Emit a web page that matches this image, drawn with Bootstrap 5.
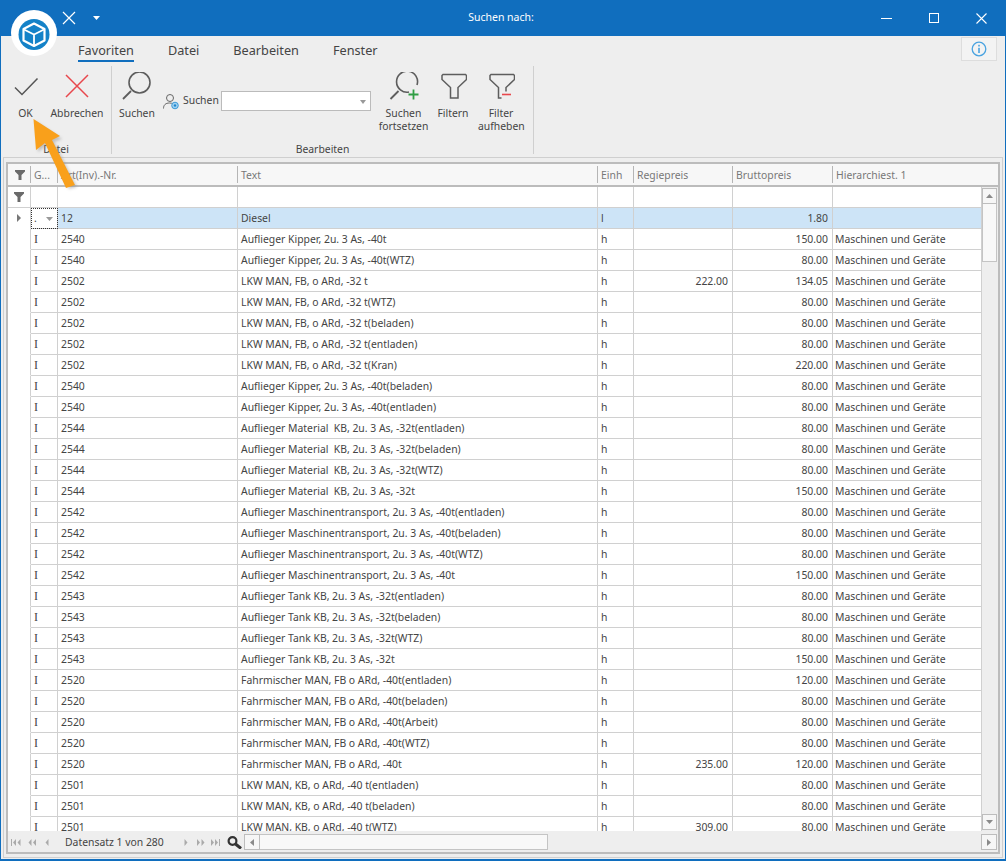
<!DOCTYPE html>
<html lang="de">
<head>
<meta charset="utf-8">
<title>Suchen nach:</title>
<link href="https://cdn.jsdelivr.net/npm/bootstrap@5.3.0/dist/css/bootstrap.min.css" rel="stylesheet">
<style>
html,body{margin:0;height:861px;overflow:hidden;background:#eee}
body{font-family:"Noto Sans","Liberation Sans",sans-serif;font-size:10.4px;color:#444;position:relative}
.win{height:861px;width:1006px;border-left:1px solid #106ebe;border-right:1px solid #106ebe;border-bottom:2px solid #106ebe;background:#eee;overflow:hidden}
.tbar{height:36px;background:#106ebe;color:#fff;margin-left:-1px;margin-right:-1px;font-size:10.5px}
.tbar-qat{padding-left:62px;width:340px;gap:17px}
.tbar-title{width:322px;text-align:center}
.tbar-btns{width:344px;padding-right:19px;gap:37px}
.tabs{height:30px;padding-left:77px;gap:34px;font-size:12.7px;color:#444;position:relative}
.tabx{padding:4px 0 0;height:26px;line-height:20px}
.tabx.on{border-bottom:2px solid #106ebe}
.infob{position:absolute;right:8px;top:1px;width:36px;height:24px;border:1px solid #ddd;background:#f3f3f3}
.rib{height:88px;position:relative}
.rgroup{height:88px;border-right:1px solid #cfcfcf;position:relative}
.g1{width:111px}.g2{width:422px}
.rlabel{position:absolute;left:0;right:0;text-align:center;line-height:14px;height:14px;top:76px}
.rbtn{position:absolute;top:6px;text-align:center;line-height:13px;white-space:nowrap}
.rbtn svg{display:block;margin:0 auto 7px}
.b-ok{left:9px;width:31px}
.b-ab{left:49px;width:54px}
.b-su{left:6px;width:38px}
.b-fo{left:265px;width:53px}
.b-fi{left:321px;width:40px}
.b-fa{left:366px;width:46px}
.sline{position:absolute;left:51px;top:25px;display:flex;align-items:center;height:20px}
.slabel{margin-left:4px}
.cmb{width:150px;height:20px;border:1px solid #bbb;background:#fff;margin-left:2px;position:relative}
.cmb i{position:absolute;right:4px;top:8px;border:3px solid transparent;border-top:4px solid #999;border-bottom:0}
.gridwrap{margin:3px 2px 0 2px;height:701px;border:1px solid #cfcfcf;padding:4px 2px 2px 2px}
.gridin{height:692px;border:2px solid #bcbcbc;background:#eee;position:relative;display:flex;flex-direction:column}
.gmain{height:667px;overflow:hidden;display:flex}
.tclip{width:974px;overflow:hidden;height:667px}
table.dt{table-layout:fixed;border-collapse:separate;border-spacing:0;width:974px;background:#fff;color:#444;font-size:10.4px}
.c0{width:23px}.c1{width:27px}.c2{width:180px}.c3{width:360px}.c4{width:36px}.c5{width:99px}.c6{width:100px}.c7{width:149px}
table.dt td,table.dt th{height:21px;padding:0 3px;border-right:1px solid #d0d0d0;border-bottom:1px solid #d0d0d0;font-weight:400;white-space:nowrap;overflow:hidden;line-height:15px}
table.dt th{background:#f7f7f7;height:23px;color:#777;border-right:0;border-bottom:2px solid #bcbcbc;position:relative;padding-top:1px}
table.dt th::after{content:"";position:absolute;right:0;top:2px;bottom:2px;border-right:1px solid #b5b5b5}
table.dt th:last-child::after{display:none}
table.dt td:last-child{padding-left:2px}
table.dt td:first-child{background:#fff;padding:0;text-align:center;border-bottom-color:#fff}
table.dt th:first-child{padding:0;text-align:center}
table.dt tr.flt td:first-child{border-bottom-color:#d0d0d0}
table.dt tr.sel td{background:#cde4f7}
table.dt tr.sel td:first-child{background:#fff}
table.dt tr.sel td.cur{background:#fff;outline:1px dotted #333;outline-offset:-1px}
table.dt td.num{text-align:right;padding-right:4px}
table.dt td.ser{font-family:"Liberation Serif",serif;font-size:12px}
.fn{display:block;margin:0 auto}
.curarrow{margin-left:9px;vertical-align:middle}
.vs{width:16px;display:flex;flex-direction:column;background:#eee}
.vhead{height:23px;flex:none;background:#f7f7f7;border-bottom:2px solid #bcbcbc;margin-bottom:1px}
.sbtn{background:#f6f6f6;border:1px solid #bdbdbd;display:flex;align-items:center;justify-content:center;flex:none}
.sbtn.ud{height:16px;width:15px}
.thumb{height:58px;width:15px;background:#f8f8f8;border:1px solid #c4c4c4;border-top:0;flex:none}
.sbtn.dn{margin-bottom:1px}
.gfoot{height:21px;display:flex;align-items:flex-start;padding-top:3px;background:#eee;font-size:10.4px;color:#444}
.pager{width:236px;height:16px;display:flex;align-items:center;padding-left:3px;white-space:nowrap}
.pager svg{flex:none}
.m7{margin-left:7px}.m9{margin-left:9px}.m6{margin-left:6px}
.ptext{margin:1px 0 0 16px;width:100px;flex:none}
.pn{margin-left:19px}
.hs{display:flex;height:16px;align-items:stretch}
.hs .sbtn{width:16px}
.hthumb{width:288px;background:#f8f8f8;border:1px solid #c4c4c4;border-left:0}
.gap{flex:1}
.sbtn.rt{width:16px;height:16px;margin-right:1px}
.overlay{position:absolute;pointer-events:none}
.ov-logo{left:11px;top:10px}
.ov-arrow{left:30px;top:115px}
</style>
</head>
<body>
<div class="win">
  <div class="tbar d-flex align-items-center">
    <div class="tbar-qat d-flex align-items-center">
      <svg width="14" height="14" viewBox="0 0 14 14"><path d="M1 1 13 13M13 1 1 13" stroke="#fff" stroke-width="1.200"/></svg>
      <svg width="7" height="4" viewBox="0 0 7 4"><path d="M0 0h7L3.500 4z" fill="#fff"/></svg>
    </div>
    <div class="tbar-title">Suchen nach:</div>
    <div class="tbar-btns d-flex align-items-center justify-content-end ms-auto">
      <svg width="11" height="11" viewBox="0 0 11 11"><path d="M0 5.500H11" stroke="#fff"/></svg>
      <svg width="10" height="10" viewBox="0 0 10 10"><rect x=".5" y=".5" width="9" height="9" fill="none" stroke="#fff"/></svg>
      <svg width="11" height="11" viewBox="0 0 11 11"><path d="M.5.500 10.500 10.500M10.500.500.500 10.500" stroke="#fff" stroke-width="1.100"/></svg>
    </div>
  </div>
  <div class="tabs d-flex">
    <div class="tabx on">Favoriten</div><div class="tabx">Datei</div><div class="tabx">Bearbeiten</div><div class="tabx">Fenster</div>
    <div class="infob d-flex align-items-center justify-content-center">
      <svg width="16" height="16" viewBox="0 0 16 16"><circle cx="8" cy="8" r="6.800" fill="none" stroke="#4aa3e0" stroke-width="1.300"/><rect x="7.200" y="3.800" width="1.600" height="1.700" fill="#4aa3e0"/><rect x="7.200" y="6.800" width="1.600" height="5.200" fill="#4aa3e0"/></svg>
    </div>
  </div>
  <div class="rib d-flex">
    <div class="rgroup g1">
      <div class="rbtn b-ok"><svg width="26" height="28" viewBox="0 0 26 28"><path d="M2 15.500 9 22.500 24.500 6.500" fill="none" stroke="#555" stroke-width="1.500"/></svg>OK</div>
      <div class="rbtn b-ab"><svg width="26" height="28" viewBox="0 0 26 28"><path d="M2 3 24 25M24 3 2 25" stroke="#e8474c" stroke-width="1.500"/></svg>Abbrechen</div>
      <div class="rlabel">Datei</div>
    </div>
    <div class="rgroup g2">
      <div class="rbtn b-su"><svg width="30" height="28" viewBox="0 0 30 28"><circle cx="17.500" cy="10.500" r="10.500" fill="none" stroke="#5d5d5d" stroke-width="1.600"/><path d="M1 27 9 19" stroke="#5d5d5d" stroke-width="1.800"/></svg>Suchen</div>
      <div class="sline">
        <svg width="16" height="17" viewBox="0 0 16 17"><circle cx="7" cy="5" r="3.500" fill="none" stroke="#666"/><path d="M.5 15.500c0-3.500 2-5.500 6-5.500 1.500 0 2.500.3 3.300.8" fill="none" stroke="#666"/><circle cx="12" cy="12.500" r="3.300" fill="#9fd0ef" stroke="#3c9ad8"/><circle cx="12" cy="12.500" r="1.200" fill="#1f86cf"/></svg>
        <span class="slabel">Suchen</span><div class="cmb"><i></i></div>
      </div>
      <div class="rbtn b-fo"><svg width="30" height="28" viewBox="0 0 30 28"><path d="M20 20A10.500 10.500 0 1 1 28 13" fill="none" stroke="#5d5d5d" stroke-width="1.600"/><path d="M1.500 27 9.500 19" stroke="#5d5d5d" stroke-width="1.800"/><path d="M24.500 17.500v10M19.500 22.500h10" stroke="#2f9e44" stroke-width="1.800"/></svg>Suchen<br>fortsetzen</div>
      <div class="rbtn b-fi"><svg width="28" height="28" viewBox="0 0 28 28"><path d="M4 2.500H26.500L27.500 3.500V7.500L19 15.500V26H11.500V15.500L3 7.500V3.500Z" fill="none" stroke="#5d5d5d" stroke-width="1.500"/></svg>Filtern</div>
      <div class="rbtn b-fa"><svg width="28" height="28" viewBox="0 0 28 28"><path d="M14.500 26H11.500V15.500L3 7.500V3.500L4 2.500H26.500L27.500 3.500V7.500L19 15.500V19.500" fill="none" stroke="#5d5d5d" stroke-width="1.500"/><path d="M15 22.500H24" stroke="#e8474c" stroke-width="1.600"/></svg>Filter<br>aufheben</div>
      <div class="rlabel">Bearbeiten</div>
    </div>
  </div>
  <div class="gridwrap">
    <div class="gridin">
      <div class="gmain">
        <div class="tclip">
        <table class="dt">
          <colgroup><col class="c0"><col class="c1"><col class="c2"><col class="c3"><col class="c4"><col class="c5"><col class="c6"><col class="c7"></colgroup>
          <thead><tr><th><svg class="fn" width="10" height="10" viewBox="0 0 10 10"><path d="M0 0H10V1.500L6.500 5V10H3.500V5L0 1.500Z" fill="#6a6a6a"/></svg></th><th>G...</th><th>Art(Inv).-Nr.</th><th>Text</th><th>Einh</th><th>Regiepreis</th><th>Bruttopreis</th><th>Hierarchiest. 1</th></tr></thead>
          <tbody>
<tr class="flt"><td><svg class="fn" width="10" height="10" viewBox="0 0 10 10"><path d="M0 0H10V1.500L6.500 5V10H3.500V5L0 1.500Z" fill="#6a6a6a"/></svg></td><td></td><td></td><td></td><td></td><td></td><td></td><td></td></tr>
<tr class="sel"><td><svg class="fn" width="4" height="8" viewBox="0 0 4 8"><path d="M0 0 4 4 0 8Z" fill="#777"/></svg></td><td class="cur">.<svg class="curarrow" width="7" height="4" viewBox="0 0 7 4"><path d="M0 0H7L3.500 4Z" fill="#999"/></svg></td><td>12</td><td>Diesel</td><td>l</td><td></td><td class="num">1.80</td><td></td></tr>
<tr><td></td><td class="ser">I</td><td>2540</td><td>Auflieger Kipper, 2u. 3 As, -40t</td><td>h</td><td></td><td class="num">150.00</td><td>Maschinen und Geräte</td></tr>
<tr><td></td><td class="ser">I</td><td>2540</td><td>Auflieger Kipper, 2u. 3 As, -40t(WTZ)</td><td>h</td><td></td><td class="num">80.00</td><td>Maschinen und Geräte</td></tr>
<tr><td></td><td class="ser">I</td><td>2502</td><td>LKW MAN, FB, o ARd, -32 t</td><td>h</td><td class="num">222.00</td><td class="num">134.05</td><td>Maschinen und Geräte</td></tr>
<tr><td></td><td class="ser">I</td><td>2502</td><td>LKW MAN, FB, o ARd, -32 t(WTZ)</td><td>h</td><td></td><td class="num">80.00</td><td>Maschinen und Geräte</td></tr>
<tr><td></td><td class="ser">I</td><td>2502</td><td>LKW MAN, FB, o ARd, -32 t(beladen)</td><td>h</td><td></td><td class="num">80.00</td><td>Maschinen und Geräte</td></tr>
<tr><td></td><td class="ser">I</td><td>2502</td><td>LKW MAN, FB, o ARd, -32 t(entladen)</td><td>h</td><td></td><td class="num">80.00</td><td>Maschinen und Geräte</td></tr>
<tr><td></td><td class="ser">I</td><td>2502</td><td>LKW MAN, FB, o ARd, -32 t(Kran)</td><td>h</td><td></td><td class="num">220.00</td><td>Maschinen und Geräte</td></tr>
<tr><td></td><td class="ser">I</td><td>2540</td><td>Auflieger Kipper, 2u. 3 As, -40t(beladen)</td><td>h</td><td></td><td class="num">80.00</td><td>Maschinen und Geräte</td></tr>
<tr><td></td><td class="ser">I</td><td>2540</td><td>Auflieger Kipper, 2u. 3 As, -40t(entladen)</td><td>h</td><td></td><td class="num">80.00</td><td>Maschinen und Geräte</td></tr>
<tr><td></td><td class="ser">I</td><td>2544</td><td>Auflieger Material&nbsp; KB, 2u. 3 As, -32t(entladen)</td><td>h</td><td></td><td class="num">80.00</td><td>Maschinen und Geräte</td></tr>
<tr><td></td><td class="ser">I</td><td>2544</td><td>Auflieger Material&nbsp; KB, 2u. 3 As, -32t(beladen)</td><td>h</td><td></td><td class="num">80.00</td><td>Maschinen und Geräte</td></tr>
<tr><td></td><td class="ser">I</td><td>2544</td><td>Auflieger Material&nbsp; KB, 2u. 3 As, -32t(WTZ)</td><td>h</td><td></td><td class="num">80.00</td><td>Maschinen und Geräte</td></tr>
<tr><td></td><td class="ser">I</td><td>2544</td><td>Auflieger Material&nbsp; KB, 2u. 3 As, -32t</td><td>h</td><td></td><td class="num">150.00</td><td>Maschinen und Geräte</td></tr>
<tr><td></td><td class="ser">I</td><td>2542</td><td>Auflieger Maschinentransport, 2u. 3 As, -40t(entladen)</td><td>h</td><td></td><td class="num">80.00</td><td>Maschinen und Geräte</td></tr>
<tr><td></td><td class="ser">I</td><td>2542</td><td>Auflieger Maschinentransport, 2u. 3 As, -40t(beladen)</td><td>h</td><td></td><td class="num">80.00</td><td>Maschinen und Geräte</td></tr>
<tr><td></td><td class="ser">I</td><td>2542</td><td>Auflieger Maschinentransport, 2u. 3 As, -40t(WTZ)</td><td>h</td><td></td><td class="num">80.00</td><td>Maschinen und Geräte</td></tr>
<tr><td></td><td class="ser">I</td><td>2542</td><td>Auflieger Maschinentransport, 2u. 3 As, -40t</td><td>h</td><td></td><td class="num">150.00</td><td>Maschinen und Geräte</td></tr>
<tr><td></td><td class="ser">I</td><td>2543</td><td>Auflieger Tank KB, 2u. 3 As, -32t(entladen)</td><td>h</td><td></td><td class="num">80.00</td><td>Maschinen und Geräte</td></tr>
<tr><td></td><td class="ser">I</td><td>2543</td><td>Auflieger Tank KB, 2u. 3 As, -32t(beladen)</td><td>h</td><td></td><td class="num">80.00</td><td>Maschinen und Geräte</td></tr>
<tr><td></td><td class="ser">I</td><td>2543</td><td>Auflieger Tank KB, 2u. 3 As, -32t(WTZ)</td><td>h</td><td></td><td class="num">80.00</td><td>Maschinen und Geräte</td></tr>
<tr><td></td><td class="ser">I</td><td>2543</td><td>Auflieger Tank KB, 2u. 3 As, -32t</td><td>h</td><td></td><td class="num">150.00</td><td>Maschinen und Geräte</td></tr>
<tr><td></td><td class="ser">I</td><td>2520</td><td>Fahrmischer MAN, FB o ARd, -40t(entladen)</td><td>h</td><td></td><td class="num">120.00</td><td>Maschinen und Geräte</td></tr>
<tr><td></td><td class="ser">I</td><td>2520</td><td>Fahrmischer MAN, FB o ARd, -40t(beladen)</td><td>h</td><td></td><td class="num">80.00</td><td>Maschinen und Geräte</td></tr>
<tr><td></td><td class="ser">I</td><td>2520</td><td>Fahrmischer MAN, FB o ARd, -40t(Arbeit)</td><td>h</td><td></td><td class="num">80.00</td><td>Maschinen und Geräte</td></tr>
<tr><td></td><td class="ser">I</td><td>2520</td><td>Fahrmischer MAN, FB o ARd, -40t(WTZ)</td><td>h</td><td></td><td class="num">80.00</td><td>Maschinen und Geräte</td></tr>
<tr><td></td><td class="ser">I</td><td>2520</td><td>Fahrmischer MAN, FB o ARd, -40t</td><td>h</td><td class="num">235.00</td><td class="num">120.00</td><td>Maschinen und Geräte</td></tr>
<tr><td></td><td class="ser">I</td><td>2501</td><td>LKW MAN, KB, o ARd, -40 t(entladen)</td><td>h</td><td></td><td class="num">80.00</td><td>Maschinen und Geräte</td></tr>
<tr><td></td><td class="ser">I</td><td>2501</td><td>LKW MAN, KB, o ARd, -40 t(beladen)</td><td>h</td><td></td><td class="num">80.00</td><td>Maschinen und Geräte</td></tr>
<tr><td></td><td class="ser">I</td><td>2501</td><td>LKW MAN, KB, o ARd, -40 t(WTZ)</td><td>h</td><td class="num">309.00</td><td class="num">80.00</td><td>Maschinen und Geräte</td></tr>
          </tbody>
        </table>
        </div>
        <div class="vs">
          <div class="vhead"></div>
          <div class="sbtn ud"><svg width="7" height="4" viewBox="0 0 7 4"><path d="M0 4H7L3.500 0Z" fill="#8a8a8a"/></svg></div>
          <div class="thumb"></div>
          <div class="gap"></div>
          <div class="sbtn ud dn"><svg width="7" height="4" viewBox="0 0 7 4"><path d="M0 0H7L3.500 4Z" fill="#8a8a8a"/></svg></div>
        </div>
      </div>
      <div class="gfoot">
        <div class="pager">
          <svg width="10" height="7" viewBox="0 0 10 7"><path d="M0 0H1V7H0ZM5 0V7L2 3.500ZM9.500 0V7L6.500 3.500Z" fill="#aaa"/></svg>
          <svg class="m7" width="8" height="7" viewBox="0 0 8 7"><path d="M3.500 0V7L.5 3.500ZM8 0V7L5 3.500Z" fill="#aaa"/></svg>
          <svg class="m9" width="4" height="7" viewBox="0 0 4 7"><path d="M3.500 0V7L.5 3.500Z" fill="#aaa"/></svg>
          <span class="ptext">Datensatz 1 von 280</span>
          <svg class="pn" width="4" height="7" viewBox="0 0 4 7"><path d="M.5 0V7L3.500 3.500Z" fill="#aaa"/></svg>
          <svg class="m9" width="8" height="7" viewBox="0 0 8 7"><path d="M0 0V7L3 3.500ZM4.500 0V7L7.500 3.500Z" fill="#aaa"/></svg>
          <svg class="m6" width="10" height="7" viewBox="0 0 10 7"><path d="M0 0V7L3 3.500ZM4 0V7L7 3.500ZM8 0H9V7H8Z" fill="#aaa"/></svg>
          <svg class="m6" width="15" height="13" viewBox="0 0 15 13"><circle cx="5.500" cy="5" r="3.900" fill="none" stroke="#333" stroke-width="2.200"/><path d="M8.500 8 14 12.500" stroke="#333" stroke-width="3"/></svg>
        </div>
        <div class="hs">
          <div class="sbtn"><svg width="4" height="7" viewBox="0 0 4 7"><path d="M4 0V7L0 3.500Z" fill="#8a8a8a"/></svg></div>
          <div class="hthumb"></div>
        </div>
        <div class="gap"></div>
        <div class="sbtn rt"><svg width="4" height="7" viewBox="0 0 4 7"><path d="M0 0V7L4 3.500Z" fill="#8a8a8a"/></svg></div>
      </div>
    </div>
  </div>
</div>
<svg class="overlay ov-logo" width="47" height="47" viewBox="0 0 47 47">
  <circle cx="23" cy="23" r="23" fill="#fff"/>
  <circle cx="23" cy="24.500" r="15.500" fill="#1482c8"/>
  <path d="M23 13.500 33.500 19V30.500L23 36 12.500 30.500V19Z" fill="#1482c8" stroke="#fff" stroke-width="2.200" stroke-linejoin="round"/>
  <path d="M13 19.500 23 24.500 33 19.500M23 24.500V35.500" fill="none" stroke="#fff" stroke-width="1.800"/>
</svg>
<svg class="overlay ov-arrow" width="55" height="80" viewBox="0 0 55 80">
  <defs><filter id="blr" x="-20%" y="-20%" width="140%" height="140%"><feGaussianBlur stdDeviation="1.500"/></filter></defs>
  <path d="M3.500 4 30 22 22 25 45 70 37 72 15 28 6 35Z" fill="#888" opacity=".45" filter="url(#blr)" transform="translate(2,2)"/>
  <path d="M3.500 4 30 21 22 25 45 70 36 73 15 28 6 35Z" fill="#f9a01b"/>
</svg>
</body>
</html>
